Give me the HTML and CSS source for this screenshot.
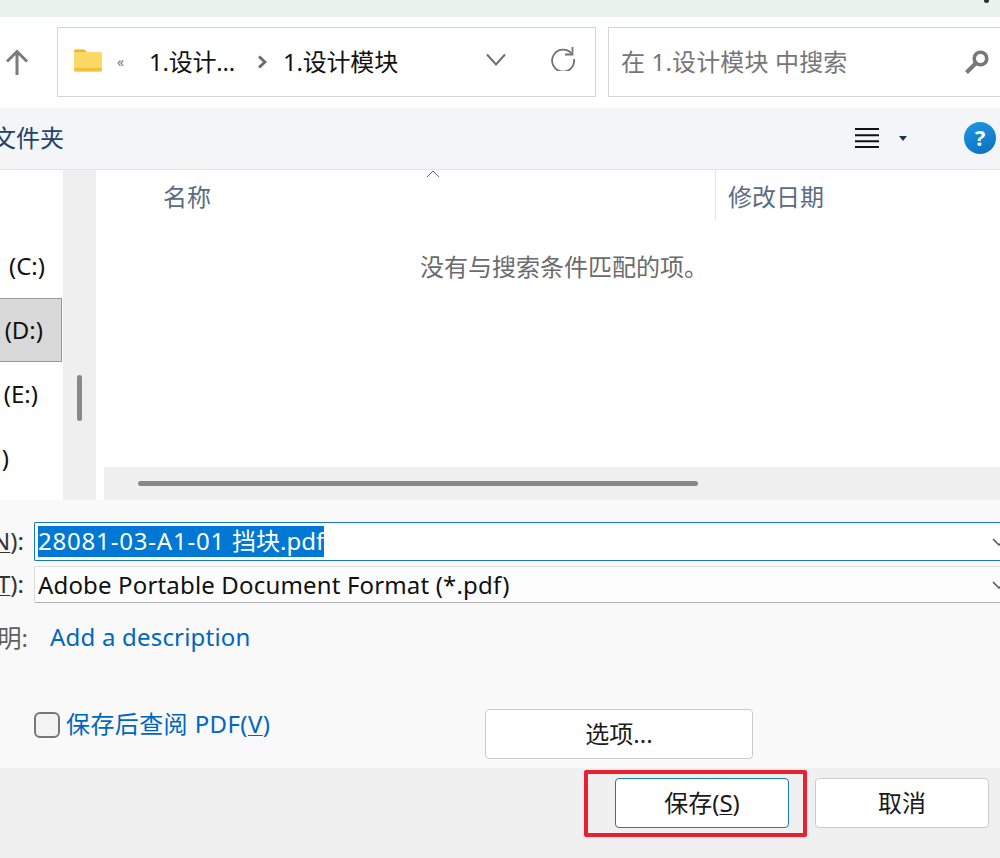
FILE: index.html
```html
<!DOCTYPE html>
<html lang="zh-CN">
<head>
<meta charset="utf-8">
<title>另存为</title>
<link rel="stylesheet" href="styles.css">
</head>
<body>
<div class="dialog">
  <div class="titlebar"><span class="title-mark"></span></div>
  <div class="navbar">
    <svg class="up-icon" viewBox="0 0 24 28"><path d="M12 26V3M2 12.5 12 2.500l10 10" fill="none" stroke="#7b7b7b" stroke-width="3"/></svg>
    <div class="address">
      <svg class="folder" viewBox="0 0 28 23"><path d="M0 2a1.500 1.500 0 0 1 1.500-1.500H10l3 2.500H0z" fill="#f5b21f"/><rect y="3" width="28" height="19.500" rx="1.500" fill="#fbd964"/><rect y="19" width="28" height="3.500" rx="1.500" fill="#f3bf3f"/></svg>
      <span class="crumb-more">«</span>
      <span class="crumb crumb-first">1.设计...</span>
      <svg class="crumb-sep" viewBox="0 0 10 14"><path d="M2 1.500 8 7l-6 5.500" fill="none" stroke="#6a6a6a" stroke-width="2.800"/></svg>
      <span class="crumb">1.设计模块</span>
      <svg class="addr-chevron" viewBox="0 0 20 14"><path d="M1 1.500 10 11.500l9-10" fill="none" stroke="#6f6f6f" stroke-width="2"/></svg>
      <svg class="refresh" viewBox="0 0 24 24"><path d="M20.500 6.500A11 11 0 1 0 23 12" fill="none" stroke="#717171" stroke-width="1.800"/><path d="M21.500 0v7.500H14" fill="none" stroke="#717171" stroke-width="1.800"/></svg>
    </div>
    <div class="search">
      <span class="search-text">在 1.设计模块 中搜索</span>
      <svg class="search-icon" viewBox="0 0 24 24"><circle cx="15.500" cy="8.500" r="6.300" fill="none" stroke="#777" stroke-width="3.600"/><path d="M10.500 13.500 1.500 22.500" stroke="#777" stroke-width="4"/></svg>
    </div>
  </div>
  <div class="toolbar">
    <span class="new-folder">新建文件夹</span>
    <div class="tool-right">
      <svg class="view-icon" viewBox="0 0 24 20"><path d="M0 1h24M0 7.300h24M0 13.300h24M0 19h24" stroke="#111" stroke-width="2"/></svg>
      <svg class="view-caret" viewBox="0 0 8 5"><path d="M0 0h8L4 5z" fill="#23344f"/></svg>
      <span class="help">?</span>
    </div>
  </div>
  <div class="content">
    <div class="tree">
      <div class="tree-row">(C:)</div>
      <div class="tree-row tree-row-selected">(D:)</div>
      <div class="tree-row">(E:)</div>
      <div class="tree-row">)</div>
    </div>
    <div class="vscroll"><span class="vthumb"></span></div>
    <div class="main">
      <div class="list">
        <div class="list-head">
          <div class="col-name">名称<svg class="sort-caret" viewBox="0 0 14 8"><path d="M1 7 7 1l6 6" fill="none" stroke="#666" stroke-width="1"/></svg></div>
          <div class="col-date">修改日期</div>
        </div>
        <div class="empty">没有与搜索条件匹配的项。</div>
      </div>
      <div class="hscroll"><span class="hthumb"></span></div>
    </div>
  </div>
  <div class="form">
    <div class="field-row field-name">
      <label class="field-label"><span>(<u>N</u>):</span></label>
      <div class="input input-active"><span class="selected"><span class="latin-wide">28081-03-A1-01 </span>挡块.pdf</span>
        <svg class="combo-arrow" viewBox="0 0 14 8"><path d="M1 1 7 7l6-6" fill="none" stroke="#555" stroke-width="1.500"/></svg>
      </div>
    </div>
    <div class="field-row field-type">
      <label class="field-label"><span>(<u>T</u>):</span></label>
      <div class="input input-plain"><span class="type-text">Adobe Portable Document Format (*.pdf)</span>
        <svg class="combo-arrow" viewBox="0 0 14 8"><path d="M1 1 7 7l6-6" fill="none" stroke="#555" stroke-width="1.500"/></svg>
      </div>
    </div>
    <div class="desc-row">
      <span class="desc-label"><span>说明:</span></span>
      <a class="desc-link">Add a description</a>
    </div>
    <div class="options-row">
      <label class="check-label"><span class="checkbox"></span><span class="check-text">保存后查阅 PDF(<u>V</u>)</span></label>
      <button class="btn btn-options"><span class="btn-text">选项...</span></button>
    </div>
  </div>
  <div class="footer">
    <div class="highlight"><button class="btn btn-save"><span class="btn-text">保存(<u>S</u>)</span></button></div>
    <button class="btn btn-cancel"><span class="btn-text">取消</span></button>
  </div>
</div>
</body>
</html>
```
FILE: styles.css
```css
* { box-sizing: border-box; }
html, body { margin: 0; padding: 0; }
body {
  width: 1000px;
  height: 858px;
  overflow: hidden;
  font-family: "Noto Sans", "Noto Sans CJK SC", sans-serif;
  font-size: 24px;
  color: #1a1a1a;
}
u { text-underline-offset: 2px; text-decoration-thickness: 1px; }
svg { display: block; flex: none; }
.dialog { display: flex; flex-direction: column; width: 1000px; height: 858px; background: #fff; overflow: hidden; }

.titlebar { height: 17px; flex: none; background: #e9f5ec; display: flex; justify-content: flex-end; }
.title-mark { width: 5px; height: 3px; margin-right: 11px; background: #333; border-radius: 0 0 3px 3px; }

.navbar { height: 91px; flex: none; display: flex; align-items: flex-start; padding-top: 10px; background: #fff; width: 1010px; }
.up-icon { width: 24px; height: 28px; margin: 22px 0 0 5px; }
.address, .search { height: 70px; border: 1px solid #d5d5d5; display: flex; align-items: center; background: #fff; }
.address { width: 539px; margin-left: 28px; padding-left: 16px; }
.folder { width: 28px; height: 23px; margin-top: -4px; }
.crumb-more { width: 9px; margin-left: 15px; font-size: 14px; color: #777; line-height: 1; }
.crumb { color: #111; font-size: 24px; white-space: nowrap; letter-spacing: -.2px; margin-top: -4px; }
.crumb-first { margin-left: 23px; width: 85px; }
.crumb-sep { width: 10px; height: 14px; margin: 0 16px 0 23px; }
.addr-chevron { width: 20px; height: 14px; margin: -4px 0 0 88px; }
.refresh { width: 24px; height: 24px; margin: -7px 0 0 45px; }
.search { width: 402px; margin-left: 12px; padding-left: 12px; }
.search-text { color: #767676; font-size: 24px; white-space: nowrap; letter-spacing: .15px; margin-top: -4px; }
.search-icon { width: 24px; height: 24px; margin-left: 118px; }

.toolbar { height: 62px; flex: none; background: #f3f5f7; border-bottom: 1px solid #e3e3e3; display: flex; align-items: center; justify-content: space-between; }
.new-folder { display: block; width: 64px; direction: rtl; overflow: hidden; white-space: nowrap; color: #23416b; font-size: 24px; margin-top: -4px; }
.tool-right { display: flex; align-items: center; padding-right: 4px; margin-top: -1px; }
.view-icon { width: 24px; height: 20px; }
.view-caret { width: 8px; height: 5px; margin: 0 57px 0 20px; }
.help { width: 32px; height: 32px; border-radius: 50%; background: linear-gradient(160deg, #1f98e4, #0a6fc0); color: #fff; font-size: 22px; font-weight: 700; line-height: 30px; text-align: center; }

.content { height: 330px; flex: none; display: flex; background: #fff; }
.tree { width: 63px; flex: none; padding-top: 64px; font-size: 24px; }
.tree-row { height: 64px; display: flex; align-items: center; justify-content: flex-end; padding: 0 18px 2px 0; color: #111; white-space: nowrap; }
.tree-row:nth-child(2) { padding-right: 18px; margin-right: 1px; }
.tree-row:nth-child(3) { padding-right: 25px; }
.tree-row:nth-child(4) { padding-right: 54px; }
.tree-row-selected { background: #d9d9d9; border: 1px solid #999; border-left: 0; }
.vscroll { width: 33px; flex: none; background: #efefef; display: flex; justify-content: center; padding-top: 205px; }
.vthumb { width: 5px; height: 46px; border-radius: 3px; background: #888; }
.main { flex: 1; min-width: 0; margin-left: 8px; display: flex; flex-direction: column; }
.list { flex: 1; min-height: 0; }
.list-head { height: 50px; display: flex; color: #5b6b84; }
.col-name { position: relative; width: 612px; padding: 8px 0 0 59px; border-right: 1px solid #e5e5e5; }
.sort-caret { position: absolute; left: 322px; top: 0; width: 14px; height: 8px; }
.col-date { padding: 8px 0 0 12px; }
.empty { margin: 28px 0 0 316px; font-size: 24px; color: #6b6b6b; white-space: nowrap; }
.hscroll { height: 33px; flex: none; background: #efefef; padding: 14px 0 0 34px; }
.hthumb { display: block; width: 560px; height: 5px; border-radius: 3px; background: #888; }

.form { height: 268px; flex: none; background: #f9f9f9; padding-top: 22px; }
.field-row { display: flex; }
.field-name { height: 39px; }
.field-type { height: 37px; margin-top: 5px; }
.field-label { width: 34px; flex: none; display: flex; justify-content: flex-end; align-items: center; overflow: hidden; padding: 0 10px 2px 0; color: #333; white-space: nowrap; }
.input { flex: 1; display: flex; align-items: center; justify-content: space-between; padding-left: 3px; min-width: 0; border-radius: 2px 0 0 2px; white-space: nowrap; }
.input-active { background: #fff; border: 1px solid #1a78b8; border-right: 0; }
.input-plain { background: #fdfdfd; border: 1px solid #dcdcdc; border-bottom-color: #b0b0b0; border-right: 0; color: #111; }
.selected { background: #0078d4; color: #fff; height: 31px; line-height: 29px; }
.latin-wide { letter-spacing: .8px; }
.type-text { letter-spacing: .16px; margin-top: 0; }
.combo-arrow { width: 14px; height: 8px; margin-right: -6px; }
.desc-row { display: flex; align-items: center; height: 34px; margin-top: 16px; }
.desc-label { width: 28px; margin-right: 22px; flex: none; display: flex; justify-content: flex-end; overflow: hidden; color: #5f5f5f; white-space: nowrap; }
.desc-link { color: #0067c0; white-space: nowrap; letter-spacing: .2px; }
.options-row { display: flex; margin-top: 56px; align-items: flex-start; }
.check-label { display: flex; align-items: center; gap: 6px; margin: 3px 0 0 34px; width: 451px; color: #0067c0; height: 26px; white-space: nowrap; }
.check-text { letter-spacing: .4px; margin-top: -5px; }
.checkbox { width: 26px; height: 26px; flex: none; border: 2px solid #777; border-radius: 6px; background: #f3f3f3; }

.btn { display: block; font: inherit; color: #1a1a1a; background: #fff; border: 1px solid #ccc; border-radius: 4px; padding: 0 0 3px; height: 50px; }
.btn-text { display: block; }
.btn-options { width: 268px; }
.footer { height: 90px; flex: none; background: #f0f0f0; display: flex; align-items: flex-start; padding: 2px 0 0 584px; }
.highlight { width: 223px; height: 67px; border: 4px solid #e8202f; border-radius: 2px; padding: 4px 0 0 27px; }
.btn-save { width: 174px; border-color: #1a78b8; }
.btn-cancel { width: 174px; margin: 8px 0 0 8px; }
```
